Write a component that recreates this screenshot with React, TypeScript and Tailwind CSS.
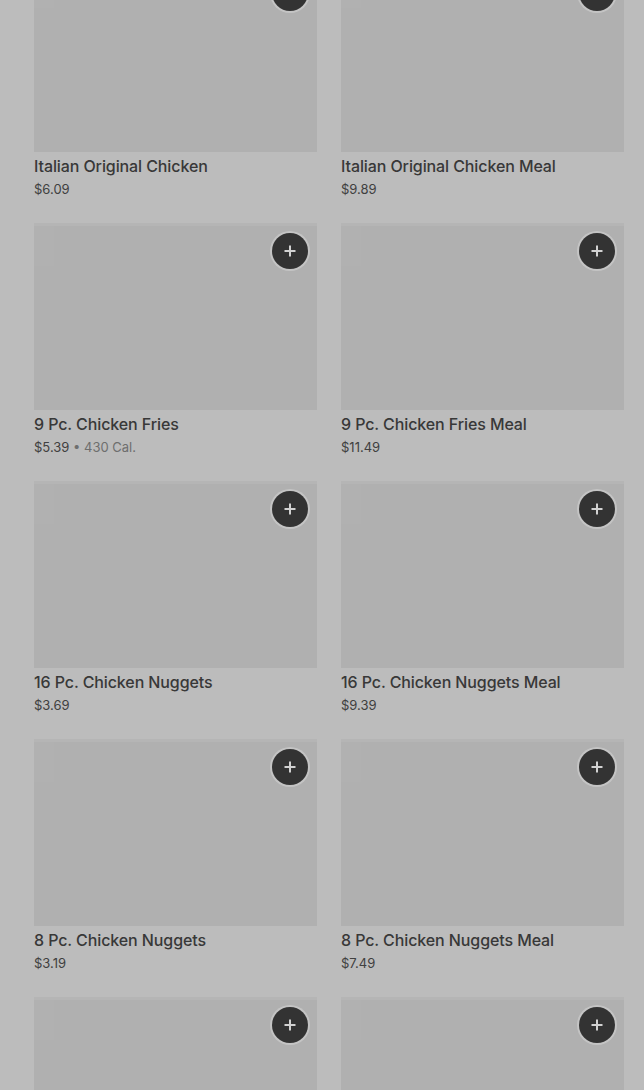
import React from "react";

type Item = { name: string; price: string; cal?: string };

const items: Item[] = [
  { name: "Italian Original Chicken", price: "$6.09" },
  { name: "Italian Original Chicken Meal", price: "$9.89" },
  { name: "9 Pc. Chicken Fries", price: "$5.39", cal: "430 Cal." },
  { name: "9 Pc. Chicken Fries Meal", price: "$11.49" },
  { name: "16 Pc. Chicken Nuggets", price: "$3.69" },
  { name: "16 Pc. Chicken Nuggets Meal", price: "$9.39" },
  { name: "8 Pc. Chicken Nuggets", price: "$3.19" },
  { name: "8 Pc. Chicken Nuggets Meal", price: "$7.49" },
];

function PlusButton() {
  return (
    <button className="absolute top-[7px] right-[9px] w-[36px] h-[36px] rounded-full bg-[#333333] ring-2 ring-[#c4c4c4] flex items-center justify-center">
      <svg width="14" height="14" viewBox="0 0 14 14" fill="none">
        <path d="M7 1.5v11M1.5 7h11" stroke="#d2d2d2" strokeWidth="2" />
      </svg>
    </button>
  );
}

function ItemImage() {
  return (
    <div className="relative h-[187px] bg-[#b0b0b0] border-t-[3px] border-[#b5b5b5]">
      {/* shimmer corner */}
      <div className="absolute left-0 top-0 w-[20px] h-[40px] bg-[#b1b1b1]" />
      <PlusButton />
    </div>
  );
}

function ItemCard({ item }: { item: Item }) {
  return (
    <div className="flex flex-col">
      <ItemImage />
      <h3 className="mt-[3px] text-[16px] leading-[22px] font-medium text-[#383838] tracking-[-0.1px]">
        {item.name}
      </h3>
      <p className="mt-[3px] text-[13px] leading-[18px] text-[#404040]">
        {item.price}
        {item.cal && (
          <span className="text-[#6e6e6e]">
            {" "}• {item.cal}
          </span>
        )}
      </p>
    </div>
  );
}

export default function App() {
  return (
    <div
      className="w-[644px] h-[1090px] overflow-hidden bg-[#bcbcbc]"
      style={{ fontFamily: "Inter, 'Liberation Sans', sans-serif" }}
    >
      <div className="-mt-[35px] pl-[34px] pr-[20px] grid grid-cols-2 gap-x-[24px] gap-y-[25px]">
        {items.map((item) => (
          <ItemCard key={item.name} item={item} />
        ))}
        <div className="flex flex-col">
          <ItemImage />
        </div>
        <div className="flex flex-col">
          <ItemImage />
        </div>
      </div>
    </div>
  );
}
